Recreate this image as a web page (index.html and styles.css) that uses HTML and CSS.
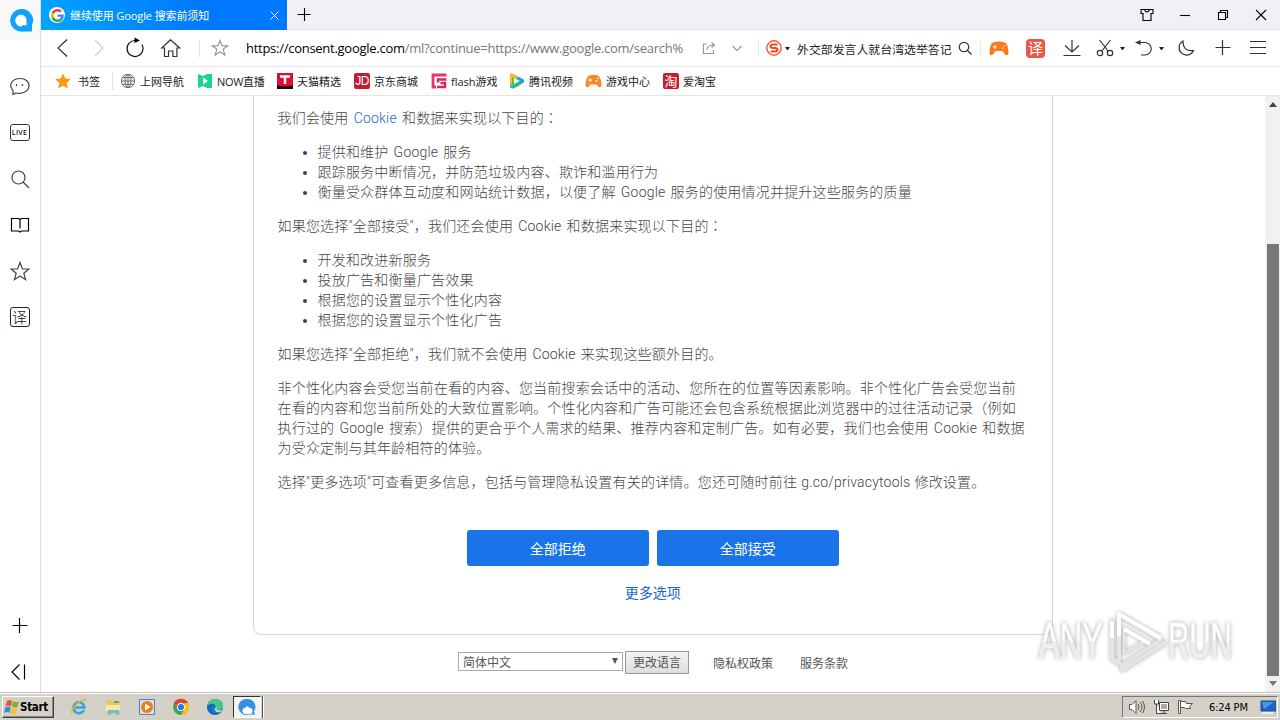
FILE: index.html
```html
<!DOCTYPE html>
<html lang="zh-CN">
<head>
<meta charset="utf-8">
<title>继续使用 Google 搜索前须知</title>
<link rel="stylesheet" href="styles.css">
</head>
<body>
<div class="screen">
<div class="browser">
<aside class="side">
  <div class="logo"><svg width="26" height="26" viewBox="0 0 26 26"><path d="M12.500 2a11.300 11.300 0 1 0 2 22.600H24V18A11.300 11.300 0 0 0 12.500 2z" fill="#12a0f8"/><path d="M13 7.500a6 6 0 1 0 .5 12l1.500-1.500 3.500.5V14.500A6 6 0 0 0 13 7.500z" fill="#fff"/></svg></div>
  <svg class="si" width="22" height="22" viewBox="0 0 22 22"><path d="M4 19.500V15.500C-1 10 3 3.500 11 3.500c6 0 9 3.500 9 7 0 6-7 9-13 7.500z"/><path d="M7.500 9v2M13.500 9v2"/></svg>
  <div class="si live">LIVE</div>
  <svg class="si" width="22" height="22" viewBox="0 0 22 22"><circle cx="9.500" cy="9.500" r="6.500"/><path d="M14 14l6 6"/></svg>
  <svg class="si dark" width="22" height="22" viewBox="0 0 22 22"><path d="M11 5.500v9M2.500 4.500h7l1.500 1 1.500-1h7v12.500h-7l-1.500 1-1.500-1h-7z"/></svg>
  <svg class="si" width="22" height="22" viewBox="0 0 22 22"><path d="M11 2.500l2.400 6.300 6.400.2-5 4.200 1.800 6.500-5.600-3.700-5.600 3.700 1.800-6.500-5-4.200 6.400-.2z"/></svg>
  <div class="si yi-line">译</div>
  <svg class="si dark side-plus" width="22" height="22" viewBox="0 0 22 22"><path d="M3.500 10.500h15M10.500 3v15"/></svg>
  <svg class="si dark side-fold" width="22" height="22" viewBox="0 0 22 22"><path d="M10.500 3.500l-7.500 7.500 7.500 7.500M15.500 3.500v15"/></svg>
</aside>
<section class="main">
  <header class="tabs">
    <div class="tab">
      <span class="g"><svg width="13" height="13" viewBox="0 0 48 48"><path fill="#ea4335" d="M24 9.500c3.500 0 6.700 1.200 9.200 3.600l6.900-6.900C35.900 2.400 30.500 0 24 0 14.600 0 6.500 5.400 2.600 13.200l8 6.200C12.400 13.700 17.700 9.500 24 9.500z"/><path fill="#4285f4" d="M47 24.500c0-1.600-.2-3.100-.4-4.500H24v9h12.900c-.6 3-2.200 5.500-4.700 7.200l7.700 6c4.500-4.200 7.100-10.400 7.100-17.700z"/><path fill="#fbbc05" d="M10.500 28.600a14.500 14.500 0 0 1 0-9.200l-8-6.200a24 24 0 0 0 0 21.600z"/><path fill="#34a853" d="M24 48c6.500 0 11.900-2.100 15.900-5.800l-7.700-6c-2.200 1.500-4.900 2.300-8.200 2.300-6.300 0-11.600-4.200-13.500-9.900l-8 6.200C6.500 42.600 14.600 48 24 48z"/></svg></span>
      <span class="tab-title">继续使用 Google 搜索前须知</span>
      <svg class="tab-x" width="9" height="9" viewBox="0 0 9 9"><path d="M.5 .5l8 8M8.500 .5l-8 8"/></svg>
    </div>
    <svg class="k newtab" width="14" height="14" viewBox="0 0 14 14"><path d="M.5 6.500h13M7.500 0v13"/></svg>
    <div class="win">
      <svg class="k" width="14" height="14" viewBox="0 0 14 14"><path d="M1 1.500h12v4h-2v7H3v-7H1zM4.500 2q2.500 4 5 0"/></svg>
      <svg class="k" width="14" height="14" viewBox="0 0 14 14"><path d="M2 7.500h10"/></svg>
      <svg class="k" width="14" height="14" viewBox="0 0 14 14"><path d="M2.500 4.500h7v7h-7zM4.500 4V2.500h7v7H10"/></svg>
      <svg class="k" width="14" height="14" viewBox="0 0 14 14"><path d="M2 2l10 10M12 2L2 12"/></svg>
    </div>
  </header>
  <nav class="bar">
    <svg class="ic w36 nav1" width="18" height="18" viewBox="0 0 18 18"><path d="M13 .5L4 9l9 8.500"/></svg>
    <svg class="ic w36 pale" width="18" height="18" viewBox="0 0 18 18"><path d="M5 1l8 8-8 8"/></svg>
    <svg class="ic w36 dark over" width="18" height="18" viewBox="0 0 18 18"><path d="M16 5.500A8 8 0 1 1 9.500 1.500"/><path d="M8.500 -1.500l5.500 3-5.500 2.500z" fill="#000" stroke="none"/></svg>
    <svg class="ic w36" width="20" height="18" viewBox="0 0 20 18"><path d="M9.500 .7L.8 9h2.700v8.500h4V12h4.400v5.500h4V9h2.700z"/></svg>
    <i class="sep s1"></i>
    <svg class="ic w36 gray" width="18" height="18" viewBox="0 0 18 18"><path d="M9 1.500l2 5.300h5.700l-4.500 3.500 1.700 5.700L9 12.700 4.100 16l1.700-5.700L1.300 6.800H7z"/></svg>
    <div class="url">https://consent.google.com<span>/ml?continue=https://www.google.com/search%</span></div>
    <svg class="ic w28 gray" width="14" height="14" viewBox="0 0 14 14"><path d="M5 3H1.500v9.500h10V9M5 9q0-5 7-5M9.500 1.500L12.500 4l-3 2.500"/></svg>
    <svg class="ic w28 gray" width="12" height="12" viewBox="0 0 12 12"><path d="M1.500 4L6 8.500 10.500 4"/></svg>
    <i class="sep s2"></i>
    <svg class="sogou" width="16" height="16" viewBox="0 0 16 16"><circle cx="8" cy="8" r="7.200" fill="#fff" stroke="#f0603c" stroke-width="1.500"/><path d="M11.500 4.500H7q-2.500 0-2.500 1.700T7 8h2q2.500 0 2.500 1.700T9 11.500H4.500" fill="none" stroke="#ee4a20" stroke-width="2"/></svg>
    <i class="caret c1"></i>
    <div class="query">外交部发言人就台湾选举答记</div>
    <svg class="ic w18" width="14" height="14" viewBox="0 0 14 14"><circle cx="6" cy="6" r="4.700"/><path d="M9.500 9.500l4 4"/></svg>
    <i class="sep s3"></i>
    <svg class="ic w36" width="20" height="15" viewBox="0 0 20 15"><path d="M4 1.500Q10-.5 16 1.500Q19 2.500 19.500 12Q19 15.500 16 13.500L13.500 10h-7L4 13.500Q1 15.500.5 12Q1 2.500 4 1.500z" fill="#fb7a18" stroke="none"/><path d="M4 6h4M6 4v4M13 7h2M15 4.500h1.500" stroke="#fff"/></svg>
    <div class="yi">译</div>
    <svg class="ic w36 dl" width="18" height="18" viewBox="0 0 18 18"><path d="M9 1v12M2 6.500l7 6.500 7-6.500M.5 16.500h17"/></svg>
    <svg class="ic w18 sc" width="18" height="18" viewBox="0 0 18 18"><path d="M3.500 1l9 11.500M14.500 1l-9 11.500"/><circle cx="4" cy="14" r="2.700"/><circle cx="14" cy="14" r="2.700"/></svg>
    <i class="caret c2"></i>
    <svg class="ic w18 un" width="18" height="18" viewBox="0 0 18 18"><path d="M2 3.500h8a6 6 0 0 1 0 12.500H6"/><path d="M0 3.500L5.500 1v5z" fill="#333" stroke="none"/></svg>
    <i class="caret c2"></i>
    <svg class="ic w18 mo" width="18" height="18" viewBox="0 0 18 18"><path d="M6 2A7.500 7.500 0 1 0 16.500 11.500Q6 13 6 2z"/></svg>
    <svg class="ic w18 pl" width="18" height="18" viewBox="0 0 18 18"><path d="M1.500 8.500h15M8.500 1v15"/></svg>
    <svg class="ic w18 me" width="18" height="18" viewBox="0 0 18 18"><path d="M1 2.500h16M1 8.500h16M1 14.500h16"/></svg>
  </nav>
  <nav class="marks">
    <a class="m m0"><svg width="16" height="16" viewBox="0 0 16 16"><path d="M8 .3l2.300 5.200 5.600.6-4.200 3.800 1.200 5.600L8 12.700 3.100 15.500l1.200-5.600L.1 6.100l5.600-.6z" fill="#fb9a14"/></svg>书签</a>
    <i class="sep"></i>
    <a class="m m1"><svg width="16" height="16" viewBox="0 0 16 16" fill="none" stroke="#666"><circle cx="8" cy="8" r="6.600"/><ellipse cx="8" cy="8" rx="3" ry="6.600"/><path d="M8 1.500v13M1.500 8h13M2.500 4.700h11M2.500 11.300h11"/></svg>上网导航</a>
    <a class="m m2"><svg width="14" height="16" viewBox="0 0 14 16"><path d="M0 1l5 2 4-2h5v14H9l-4-2-5 2z" fill="#18d68c"/><path d="M5 4.500l5 3.500-5 3.500z" fill="#fff"/></svg><span>NOW直播</span></a>
    <a class="m m3"><svg width="16" height="16" viewBox="0 0 16 16"><path d="M0 0h16v16H0z" fill="#e30c32"/><path d="M0 12q8 3 16 0v4H0z" fill="#171012"/><path d="M3 3.500h10M8 4v7" stroke="#fff" stroke-width="2.500"/></svg>天猫精选</a>
    <a class="m m4"><span class="tile jd">JD</span>京东商城</a>
    <a class="m m5"><svg width="16" height="16" viewBox="0 0 16 16" fill="none"><path d="M15.500 2H2v12h3" stroke="#e23a68" stroke-width="2.800"/><path d="M15.500 6.500H7v3M9.500 10H14v4H6" stroke="#d52b58" stroke-width="2.500"/></svg>flash游戏</a>
    <a class="m m6"><svg width="16" height="16" viewBox="0 0 16 16"><path d="M1 2Q1-.5 4 1l10 5q2.500 2 0 4L4 15.500Q1 16 1 13z" fill="#1ca4ef"/><path d="M1 2Q1-.5 4 1l5 2.500-6 10Q0 11 1 2z" fill="#ffba21"/><path d="M3 14.500l11-5q-4 4-10 6z" fill="#54bd27"/><path d="M3 12V4l9 4-7 4.500z" fill="#51c83c"/><path d="M5 5l5.500 3L5 11z" fill="#fff"/></svg>腾讯视频</a>
    <a class="m m7"><svg width="17" height="14" viewBox="0 0 20 16"><path d="M4 2Q10-1 16 2Q19 4 19.500 13Q19 16 16 15L13.500 12h-7L4 15Q1 16 .5 13Q1 4 4 2z" fill="#f58a2c"/><path d="M4 7h4M6 5v4M12.500 8h2M14.500 5h2" stroke="#fff" stroke-width="1.500"/></svg>游戏中心</a>
    <a class="m m8"><span class="tile tao">淘</span>爱淘宝</a>
  </nav>
  <div class="page">
    <main class="content">
      <div class="card">
        <p>我们会使用 <a>Cookie</a> 和数据来实现以下目的<span class="mid" lang="zh-TW">：</span></p>
        <ul><li>提供和维护 Google 服务</li><li>跟踪服务中断情况，并防范垃圾内容、欺诈和滥用行为</li><li>衡量受众群体互动度和网站统计数据，以便了解 Google 服务的使用情况并提升这些服务的质量</li></ul>
        <p>如果您选择"全部接受"，我们还会使用 Cookie 和数据来实现以下目的<span class="mid" lang="zh-TW">：</span></p>
        <ul><li>开发和改进新服务</li><li>投放广告和衡量广告效果</li><li>根据您的设置显示个性化内容</li><li>根据您的设置显示个性化广告</li></ul>
        <p>如果您选择"全部拒绝"，我们就不会使用 Cookie 来实现这些额外目的。</p>
        <p>非个性化内容会受您当前在看的内容、您当前搜索会话中的活动、您所在的位置等因素影响。非个性化广告会受您当前<br>在看的内容和您当前所处的大致位置影响。个性化内容和广告可能还会包含系统根据此浏览器中的过往活动记录（例如<br>执行过的 Google 搜索）提供的更合乎个人需求的结果、推荐内容和定制广告。如有必要，我们也会使用 Cookie 和数据<br>为受众定制与其年龄相符的体验。</p>
        <p class="last">选择"更多选项"可查看更多信息，包括与管理隐私设置有关的详情。您还可随时前往 g.co/privacytools 修改设置。</p>
        <div class="btns"><button>全部拒绝</button><button>全部接受</button></div>
        <a class="more">更多选项</a>
      </div>
      <footer class="foot">
        <div class="select"><span>简体中文</span><i></i></div>
        <div class="chg">更改语言</div>
        <a class="f1">隐私权政策</a><a class="f2">服务条款</a>
      </footer>
    </main>
    <div class="scroll"><i class="up"></i><div class="thumb"></div><i class="down"></i></div>
  </div>
</section>
</div>
<footer class="task">
  <div class="start"><svg width="16" height="16" viewBox="0 0 16 16"><path d="M3 2q3-2 5 0L7 7.500q-3-2-5.500 0z" fill="#e8572a"/><path d="M9 2q3 2 6 .5L13.500 8Q11 9.500 8 7.500z" fill="#7ab534"/><path d="M1.200 8.500q3-2 5.500 0L5.500 14q-3-2-5.500 0z" fill="#3d8cd8"/><path d="M7.800 8.800q3 2 5.500.5L12 14.500q-3 2-5.500 0z" fill="#f8c22a"/></svg>Start</div>
  <svg class="t1" width="18" height="18" viewBox="0 0 18 18" fill="none"><path d="M14 12A5.500 5.500 0 1 1 14.500 9.500H5" stroke="#34a4e0" stroke-width="2.600"/><path d="M2.500 16Q-.5 14 6 7T16.500 2.500" stroke="#e9b92d" stroke-width="1.500"/></svg>
  <svg class="t2" width="18" height="18" viewBox="0 0 18 18"><path d="M2 2h6l1 2h7v12H2z" fill="#e9c862"/><path d="M2 7h14v6H2z" fill="#f8eaa0"/><path d="M4 12h11v5h-3v-2H7v2H4z" fill="#6cb9dc"/><path d="M10 3h5v2h-5z" fill="#68aa55"/></svg>
  <svg class="t3" width="18" height="18" viewBox="0 0 18 18"><path d="M1.500 1.500h15v15h-15z" fill="#cfe2f0" stroke="#4b87bd"/><circle cx="9" cy="9" r="6" fill="#f07c12"/><path d="M7 5.500l5.500 3.500L7 12.500z" fill="#fff"/></svg>
  <svg class="t4" width="18" height="18" viewBox="0 0 18 18"><circle cx="9" cy="9" r="8" fill="#34a853"/><path d="M2 5A8 8 0 0 1 16 5H9L6 11z" fill="#df4532"/><path d="M16 5A8 8 0 0 1 9 17l3.500-6V5z" fill="#fbc116"/><circle cx="9" cy="9" r="4" fill="#fff"/><circle cx="9" cy="9" r="3.100" fill="#2875e8"/></svg>
  <svg class="t5" width="18" height="18" viewBox="0 0 18 18"><circle cx="9" cy="9" r="8" fill="#1480cf"/><path d="M1 8Q3 1 9 1q8 0 8 7 0 4-5 4-3 0-2-3Q9 4 1 8z" fill="#42ca85"/><path d="M1 8q4-4 8-1-3 1-3 4 1 6 9 3-3 3-6 3Q1 16 1 8z" fill="#126abd"/><path d="M11 9q-2 4 5 3l-1.500 2Q8 15 9 10z" fill="#d4d0c8"/></svg>
  <div class="active"><svg width="18" height="18" viewBox="0 0 18 18"><path d="M9 1a8 8 0 1 0 2 15.500h6l-1-3A8 8 0 0 0 9 1z" fill="#3490e3"/><path d="M4.500 14q-.5-4 2.500-4 2-3.500 4.500 0 2.500-.5 3 2 1 4.500-4.500 4-4 1-5.500-2z" fill="#fff"/></svg></div><i class="grip"></i>
  <div class="tray">
    <svg width="18" height="16" viewBox="0 0 18 16" fill="#fff" stroke="#555"><path d="M1.500 5.500H4l4-4v13l-4-4H1.500z"/><path d="M10 5q2 3 0 6M12 3q4 5 0 10M14.500 2q4 6 0 12" fill="none"/></svg>
    <svg class="net" width="17" height="16" viewBox="0 0 17 16" fill="#fff" stroke="#444"><path d="M6.500 3.500h9v8h-9zM8 14.500h6M11 12v2M1.500 1v4h4V1M3.500 5v9.500H8"/><path d="M8 5h6v5H8z" fill="#aaa" stroke="none"/></svg>
    <svg class="flag" width="17" height="16" viewBox="0 0 17 16" fill="#fff" stroke="#555"><path d="M1.500 1.500h2v13h-2zM3.500 2.500h5l1 2h6l-3 3 1 2h-5l-1-1h-4z"/></svg>
    <span class="clock">6:24 PM</span>
    <svg class="desk" width="16" height="14" viewBox="0 0 16 14"><path d="M1 1h15v10H1z" fill="#1d62cb" stroke="#264e86"/><path d="M2 2h12L4 9z" fill="#4b96ec"/><path d="M2 13h11" stroke="#eee" stroke-width="2"/></svg>
  </div>
</footer>
<svg class="mark" width="210" height="72" viewBox="0 0 210 72">
  <defs><linearGradient id="fade" x1="0" y1="0" x2="0" y2="1"><stop offset=".5" stop-color="#fff"/><stop offset=".52" stop-color="#ececec"/></linearGradient></defs>
  <g fill="url(#fade)" stroke="#f6f6f6" stroke-width="1"><text transform="translate(3 52) scale(.62 1)">ANY</text><text transform="translate(132 52) scale(.59 1)">RUN</text></g>
  <g fill="none" stroke-linejoin="round"><path d="M76 13v40l7 4V9l42 25-39 25v5l44-28" stroke="#e4e4e4" stroke-width="4"/><path d="M88 22v25l21-12z" stroke="#e4e4e4" stroke-width="3"/><path d="M76 32V15M83 30V8l42 24M88 23l26 15" stroke="#fff" stroke-width="4"/></g>
</svg>
</div>
</body>
</html>
```
FILE: styles.css
```css
* { box-sizing: border-box; }
body { margin: 0; background: #fff; overflow: hidden; font-family: "Liberation Sans", "Noto Sans CJK SC", sans-serif; }
.screen { width: 1280px; height: 720px; display: flex; flex-direction: column; position: relative; }
.browser { height: 692px; display: flex; }
svg { flex: none; display: block; }
.side { width: 41px; border-right: 1px solid #dedede; display: flex; flex-direction: column; align-items: center; padding-right: 1px; }
.logo { height: 40px; width: 40px; background: #f8f8fa; padding: 7px 0 0 8px; }
.si { width: 22px; height: 22px; flex: none; fill: none; stroke: #444; stroke-width: 1.2; margin-bottom: 24px; }
.logo + .si { margin-top: 35px; }
.live { width: 20px; height: 17px; margin: 3px 0 27px; border: 1px solid #333; border-radius: 3px; font: 600 7px/15px "Open Sans", sans-serif; text-align: center; color: #111; letter-spacing: .3px; }
.dark { stroke: #000; }
.yi-line { width: 20px; height: 20px; margin-top: 1px; border: 1.300px solid #222; border-radius: 3px; font: 300 15px/17px "Noto Sans CJK SC", sans-serif; text-align: center; color: #111; }
.side-plus { margin-top: auto; margin-bottom: 24px; }
.side-fold { margin-bottom: 9px; }
.main { width: 1239px; display: flex; flex-direction: column; }
.tabs { height: 30px; flex: none; background: #f0f0f5; border-bottom: 1px solid #e3e3e9; display: flex; align-items: center; }
.tab { width: 246px; height: 30px; margin-bottom: -1px; background: linear-gradient(65deg, #00a6ff, #0078ff 65%); color: #fff; display: flex; align-items: center; padding-left: 8px; }
.g { width: 16px; height: 16px; border-radius: 50%; background: #fff; display: grid; place-items: center; }
.tab-title { width: 200px; margin-left: 5px; margin-top: -1px; font: 11px "Open Sans", "Noto Sans CJK SC", sans-serif; letter-spacing: -.1px; white-space: nowrap; }
.tab-x { stroke: #fff; }
.k { fill: none; stroke: #000; stroke-width: 1.1; }
.newtab { margin-left: 10px; }
.win { display: flex; gap: 24px; margin-left: auto; margin-right: 12px; }
.bar { height: 37px; flex: none; border-bottom: 1px solid #e5e5e5; display: flex; align-items: center; padding-left: 4px; }
.ic { fill: none; stroke: #333; stroke-width: 1.200; }
.over { overflow: visible; }
.w36 { width: 36px; } .w28 { width: 28px; } .w18 { width: 18px; }
.pale { stroke: #ccc; } .gray { stroke: #999; } .ic.dark { stroke: #111; }
.sep { width: 1px; height: 17px; background: #e0e0e0; flex: none; }
.s1 { margin: 0 2px 0 10px; }
.url { width: 441px; margin: 0 8px; font: 13px "Open Sans", sans-serif; letter-spacing: -.27px; white-space: nowrap; color: #000; }
.url span { color: #777; }
.s2 { margin: 0 7px; background: #d5eaf8; }
.sogou { margin-right: 3px; }
.caret { flex: none; width: 5px; border: solid transparent; border-width: 3px 2.500px 0; border-top-color: #222; }
.query { width: 156px; margin: 0 3px 0 7px; font: 11.900px "Noto Sans CJK SC", sans-serif; color: #222; white-space: nowrap; }
.s3 { margin-left: 6px; background: #fbe5d4; }
.yi { width: 19px; height: 19px; margin: 0 9px 0 9px; border-radius: 4px; background: #ee5748; color: #fff; font: 15px/18px "Noto Sans CJK SC", sans-serif; text-align: center; }
.sc { margin-left: 6px; } .c2 { margin-left: 6px; } .un { margin-left: 10px; } .mo { margin-left: 13px; } .pl { margin-left: 19px; } .me { margin-left: 17px; }
.marks { height: 29px; flex: none; border-bottom: 1px solid #e5e5e5; display: flex; align-items: center; padding-left: 14px; font: 11px "Open Sans", "Noto Sans CJK SC", sans-serif; color: #222; }
.m { display: flex; align-items: center; gap: 4px; white-space: nowrap; width: 77px; }
.m0 { width: 57px; gap: 7px; }
.m1 { margin-left: 7px; width: 78px; } .m2 { gap: 5px; width: 79px; } .m2 span { letter-spacing: -.3px; } .m5 { width: 78px; } .m6 { width: 76px; } .m7 { width: 78px; }
.tile { width: 16px; height: 16px; border-radius: 2px; background: #c51d2e; color: #fff; text-align: center; }
.jd { font: 12px/16px "Liberation Sans", sans-serif; letter-spacing: -.5px; }
.tao { font: 13px/15px "Noto Sans CJK SC", sans-serif; }
.page { height: 596px; display: flex; }
.content { width: 1224px; padding-left: 212px; }
.card { width: 800px; height: 539px; border: 1px solid #d4d7da; border-top: 0; border-radius: 0 0 8px 8px; padding: 12px 24px 0 23.500px; color: #444; font: 300 14px/20px Roboto, "Noto Sans CJK SC", sans-serif; letter-spacing: .2px; word-spacing: 1.500px; white-space: nowrap; }
.card p, .card ul { margin: 0 0 14px; }
.card .last { word-spacing: .5px; }
.card ul { padding-left: 40px; }
.card a { color: #1967d2; }
.mid { font-family: "Noto Sans CJK TC", sans-serif; line-height: 1; }
.btns { display: flex; justify-content: center; gap: 8px; margin-top: 38px; }
.btns button { width: 182px; height: 36px; border: 0; border-radius: 3px; background: #1a73e8; color: #fff; font: 14px "Noto Sans CJK SC", sans-serif; }
.card .more { display: block; text-align: center; margin-top: 17px; letter-spacing: 0; font-weight: 400; }
.foot { display: flex; align-items: center; height: 24px; margin: 15px 0 0 205px; font: 12px "Noto Sans CJK SC", sans-serif; color: #555; }
.select { width: 165px; height: 19px; margin-top: -2px; border: 1px solid #aaa; display: flex; align-items: center; justify-content: space-between; padding: 0 4px; }
.select i { border: solid transparent; border-width: 6px 3.500px 0; border-top-color: #555; }
.chg { width: 64px; height: 23px; margin-left: 2px; border: 1px solid #999; background: linear-gradient(#f4f4f4, #ddd); text-align: center; line-height: 20px; }
.f1 { margin-left: 24px; } .f2 { margin-left: 27px; }
.scroll { width: 15px; background: #f1f1f1; display: flex; flex-direction: column; align-items: center; }
.up { margin-top: 6px; border: solid transparent; border-width: 0 4px 5px; border-bottom-color: #444; }
.thumb { width: 12px; height: 432px; margin-top: 137px; background: #787878; }
.down { margin-top: 5px; border: solid transparent; border-width: 5px 4px 0; border-top-color: #777; }
.task { height: 28px; background: #d4d0c8; border-top: 1px solid #c5c1b9; box-shadow: inset 0 1px #fff; display: flex; align-items: center; padding: 1px 2px 0; }
.start { width: 52px; height: 22px; border: 1px solid; border-color: #fff #404040 #404040 #fff; box-shadow: inset -1px -1px #888; display: flex; align-items: center; padding-left: 1px; font: bold 11.500px "DejaVu Sans Condensed", sans-serif; letter-spacing: -.3px; color: #000; }
.t1 { margin-left: 16px; } .t2, .t3, .t4, .t5 { margin-left: 16px; }
.active { width: 28px; height: 22px; margin-left: 9px; border: 1px solid; border-color: #333 #fff #fff #333; background: #f5f3ef; display: grid; place-items: center; }
.grip { width: 2px; height: 22px; margin-left: 1px; border-left: 1px solid #555; background: #fff; }
.tray { width: 156px; height: 22px; margin-left: auto; border: 1px solid; border-color: #777 #fff #fff #777; display: flex; align-items: center; padding-left: 5px; }
.net { margin-left: 7px; } .flag { margin-left: 7px; }
.clock { width: 40px; margin-left: 15px; font: 11px "DejaVu Sans Condensed", sans-serif; white-space: nowrap; letter-spacing: -.15px; color: #000; }
.desk { margin-left: 11px; }
.mark { position: absolute; left: 1036px; top: 606px; filter: drop-shadow(0 0 2px #aaa); font: 50px "Liberation Sans", sans-serif; }
```
